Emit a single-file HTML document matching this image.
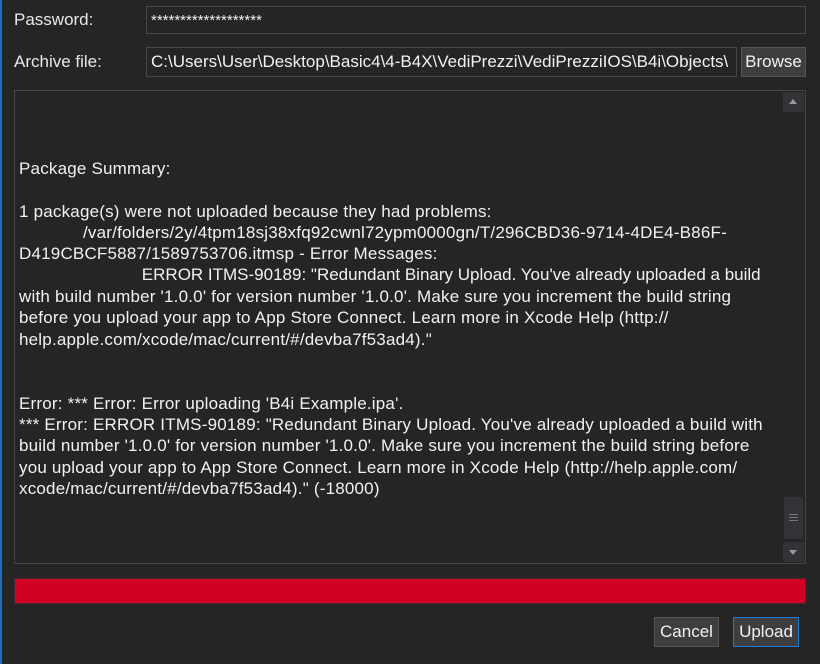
<!DOCTYPE html>
<html><head><meta charset="utf-8"><style>
html,body{margin:0;padding:0;width:820px;height:664px;overflow:hidden;background:#252526;font-family:"Liberation Sans",sans-serif;color:#f1f1f1}
.abs{position:absolute}
.lbl{font-size:17px;color:#e8e8e8}
.box{background:#252526;border:1px solid #464646;box-sizing:border-box}
.txt{position:absolute;left:19px;font-size:17px;letter-spacing:0.2px;white-space:pre;color:#f1f1f1;line-height:21px}
.btn{position:absolute;background:#3e3e40;border:1px solid #555;box-sizing:border-box;font-size:17px;color:#f1f1f1;text-align:center;line-height:28px}
</style></head><body>
<div class="abs" style="left:0;top:0;width:2px;height:664px;background:#1c6fc0"></div>
<div class="abs lbl" style="left:14px;top:10px">Password:</div>
<div class="abs box" style="left:146px;top:6px;width:660px;height:28px"></div>
<div class="abs" style="left:151px;top:12px;font-size:15px;color:#f1f1f1">*******************</div>
<div class="abs lbl" style="left:14px;top:52px">Archive file:</div>
<div class="abs box" style="left:146px;top:47px;width:591px;height:30px"></div>
<div class="abs" style="left:151px;top:52px;font-size:17px;color:#f1f1f1;white-space:nowrap;width:584px;overflow:hidden">C:\Users\User\Desktop\Basic4\4-B4X\VediPrezzi\VediPrezziIOS\B4i\Objects\</div>
<div class="btn" style="left:741px;top:47px;width:65px;height:30px">Browse</div>
<div class="abs box" style="left:14px;top:90px;width:792px;height:474px"></div>
<div class="abs" style="left:783px;top:92px;width:21px;height:20px;background:#333337"></div>
<div class="abs" style="left:789px;top:99px;width:0;height:0;border-left:4px solid transparent;border-right:4px solid transparent;border-bottom:5px solid #999"></div>
<div class="abs" style="left:784px;top:497px;width:19px;height:42px;background:#333337"></div>
<div class="abs" style="left:789px;top:514px;width:9px;height:1px;background:#777;box-shadow:0 3px 0 #777,0 6px 0 #777"></div>
<div class="abs" style="left:783px;top:542px;width:21px;height:20px;background:#333337"></div>
<div class="abs" style="left:789px;top:550px;width:0;height:0;border-left:4px solid transparent;border-right:4px solid transparent;border-top:5px solid #999"></div>
<div class="txt" style="top:158px">Package Summary:</div>
<div class="txt" style="top:201px">1 package(s) were not uploaded because they had problems:</div>
<div class="txt" style="top:222px">             /var/folders/2y/4tpm18sj38xfq92cwnl72ypm0000gn/T/296CBD36-9714-4DE4-B86F-</div>
<div class="txt" style="top:243px">D419CBCF5887/1589753706.itmsp - Error Messages:</div>
<div class="txt" style="top:264px;letter-spacing:0">                          ERROR ITMS-90189: "Redundant Binary Upload. You've already uploaded a build</div>
<div class="txt" style="top:286px">with build number '1.0.0' for version number '1.0.0'. Make sure you increment the build string</div>
<div class="txt" style="top:307px">before you upload your app to App Store Connect. Learn more in Xcode Help (http://</div>
<div class="txt" style="top:329px">help.apple.com/xcode/mac/current/#/devba7f53ad4)."</div>
<div class="txt" style="top:393px">Error: *** Error: Error uploading 'B4i Example.ipa'.</div>
<div class="txt" style="top:414px">*** Error: ERROR ITMS-90189: "Redundant Binary Upload. You've already uploaded a build with</div>
<div class="txt" style="top:435px">build number '1.0.0' for version number '1.0.0'. Make sure you increment the build string before</div>
<div class="txt" style="top:457px">you upload your app to App Store Connect. Learn more in Xcode Help (http://help.apple.com/</div>
<div class="txt" style="top:478px">xcode/mac/current/#/devba7f53ad4)." (-18000)</div>
<div class="abs" style="left:14px;top:578px;width:792px;height:26px;background:#d20025;border:1px solid #4a2a2e;box-sizing:border-box"></div>
<div class="btn" style="left:654px;top:617px;width:65px;height:30px">Cancel</div>
<div class="btn" style="left:733px;top:617px;width:66px;height:30px;border-color:#1c7cd6">Upload</div>
</body></html>
